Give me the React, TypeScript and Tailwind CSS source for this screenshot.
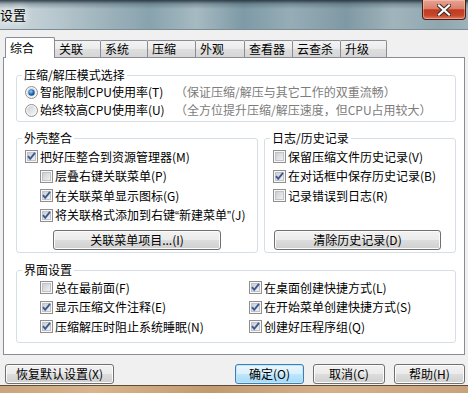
import React from "react";

type Item = { label: React.ReactNode; checked: boolean; indent?: boolean };

function CheckBox({ checked }: { checked: boolean }) {
  return (
    <svg width="13" height="13" viewBox="0 0 13 13" className="shrink-0">
      <defs>
        <linearGradient id="cb-fill" x1="0" y1="0" x2="1" y2="1">
          <stop offset="0" stopColor="#c9ccd1" />
          <stop offset="1" stopColor="#f3f3f3" />
        </linearGradient>
      </defs>
      <rect x="0.5" y="0.5" width="12" height="12" fill="#f8f8f8" stroke="#8f8f8f" />
      <rect x="2.5" y="2.5" width="8" height="8" fill="url(#cb-fill)" stroke="#bfc3c8" />
      {checked && (
        <path d="M3 6.2 L5.2 8.8 L10 2.8" fill="none" stroke="#3c5a92" strokeWidth="1.9" />
      )}
    </svg>
  );
}

function Radio({ checked }: { checked: boolean }) {
  return (
    <svg width="13" height="13" viewBox="0 0 13 13" className="shrink-0">
      <defs>
        <linearGradient id="rd-fill" x1="0" y1="0" x2="1" y2="1">
          <stop offset="0" stopColor="#cdd0d4" />
          <stop offset="1" stopColor="#f6f6f6" />
        </linearGradient>
        <radialGradient id="rd-dot" cx="0.4" cy="0.35" r="0.7">
          <stop offset="0" stopColor="#8fd0f5" />
          <stop offset="0.6" stopColor="#1d6cb8" />
          <stop offset="1" stopColor="#0d3f7a" />
        </radialGradient>
      </defs>
      <circle cx="6.5" cy="6.5" r="6" fill="#f6f6f6" stroke="#8f8f8f" />
      <circle cx="6.5" cy="6.5" r="4.4" fill="url(#rd-fill)" />
      {checked && <circle cx="6.5" cy="6.5" r="3.2" fill="url(#rd-dot)" />}
    </svg>
  );
}

function Check({ item, h = "h-[19.5px]" }: { item: Item; h?: string }) {
  return (
    <div className={`flex items-center gap-[2px] ${h} ${item.indent ? "pl-[15px]" : ""}`}>
      <CheckBox checked={item.checked} />
      <span className="whitespace-nowrap leading-[16px]">{item.label}</span>
    </div>
  );
}

function Group({
  title,
  className = "",
  children,
}: {
  title: string;
  className?: string;
  children: React.ReactNode;
}) {
  return (
    <fieldset className={`border border-[#d5dfe5] rounded-[3px] p-0 m-0 min-w-0 ${className}`}>
      <legend className="ml-[5px] px-[2px] leading-[16px]">{title}</legend>
      {children}
    </fieldset>
  );
}

function Button({
  children,
  className = "",
  primary = false,
}: {
  children: React.ReactNode;
  className?: string;
  primary?: boolean;
}) {
  return (
    <div
      className={`flex items-center justify-center h-[20px] rounded-[3px] border leading-[16px] whitespace-nowrap ${
        primary
          ? "border-[#3c7fb1] shadow-[inset_0_0_0_1px_#bfe6fb] bg-[linear-gradient(#eaf6fd_0%,#d9f0fc_50%,#bee6fd_51%,#a7d9f5_100%)]"
          : "border-[#707070] shadow-[inset_0_0_0_1px_#fbfbfb] bg-[linear-gradient(#f2f2f2_0%,#ebebeb_50%,#dddddd_51%,#cfcfcf_100%)]"
      } ${className}`}
    >
      {children}
    </div>
  );
}

const tabs = [
  { name: "综合", w: "w-[50px]" },
  { name: "关联", w: "w-[46px]" },
  { name: "系统", w: "w-[47px]" },
  { name: "压缩", w: "w-[48px]" },
  { name: "外观", w: "w-[49px]" },
  { name: "查看器", w: "w-[48px]" },
  { name: "云查杀", w: "w-[48px]" },
  { name: "升级", w: "w-[46px]" },
];

const shellItems: Item[] = [
  { label: "把好压整合到资源管理器(M)", checked: true },
  { label: "层叠右键关联菜单(P)", checked: false, indent: true },
  { label: "在关联菜单显示图标(G)", checked: true, indent: true },
  {
    label: (
      <>
        将关联格式添加到右键<span className="font-['Liberation_Sans',sans-serif]">“</span>新建菜单
        <span className="font-['Liberation_Sans',sans-serif]">”</span>(J)
      </>
    ),
    checked: true,
    indent: true,
  },
];

const logItems: Item[] = [
  { label: "保留压缩文件历史记录(V)", checked: false },
  { label: "在对话框中保存历史记录(B)", checked: true },
  { label: "记录错误到日志(R)", checked: false },
];

const uiLeft: Item[] = [
  { label: "总在最前面(F)", checked: false },
  { label: "显示压缩文件注释(E)", checked: true },
  { label: "压缩解压时阻止系统睡眠(N)", checked: true },
];

const uiRight: Item[] = [
  { label: "在桌面创建快捷方式(L)", checked: true },
  { label: "在开始菜单创建快捷方式(S)", checked: true },
  { label: "创建好压程序组(Q)", checked: true },
];

export default function App() {
  return (
    <div className="w-[468px] h-[393px] overflow-hidden bg-[#f0f0f0] flex flex-col font-['Noto_Sans_CJK_SC',sans-serif] text-[12px] text-black">
      {/* title bar */}
      <div className="h-[30px] shrink-0 flex items-start border-b border-[#7b8b93] bg-[linear-gradient(180deg,rgba(28,42,52,0.85)_0px,rgba(60,80,92,0.35)_4px,rgba(0,0,0,0)_9px),linear-gradient(90deg,#cfdadf_0%,#bccbd1_10%,#9fb4bc_22%,#88a3ae_32%,#a6bac1_42%,#7d9aa6_52%,#96adb6_62%,#7f99a4_74%,#a0b4bb_84%,#90a7b0_94%,#9db2ba_100%)]">
        <span className="mt-[6px] ml-0 text-[13px] leading-[18px] [text-shadow:0_0_6px_#ffffff,0_0_10px_#ffffff]">
          设置
        </span>
        <div className="ml-auto mr-[2px] w-[44px] h-[20px] flex items-center justify-center rounded-b-[4px] border border-t-0 border-[#4a1e15] bg-[linear-gradient(#e8a393_0%,#d9806b_45%,#c23a20_52%,#c5462a_80%,#e27a5d_100%)] shadow-[inset_0_0_0_1px_rgba(255,210,200,0.45)]">
          <svg width="14" height="12" viewBox="0 0 14 12">
            <path
              d="M2 1.5 L12 10.5 M12 1.5 L2 10.5"
              stroke="#3a2a28"
              strokeWidth="4.2"
              strokeLinecap="square"
            />
            <path
              d="M2 1.5 L12 10.5 M12 1.5 L2 10.5"
              stroke="#ffffff"
              strokeWidth="2.2"
              strokeLinecap="square"
            />
          </svg>
        </div>
      </div>

      <div className="px-[3px] flex flex-col">
        {/* tabs */}
        <div className="mt-[7px] h-[20px] flex items-end pl-[2px]">
          {tabs.map((t, i) =>
            i === 0 ? (
              <div
                key={t.name}
                className={`${t.w} h-[21px] -mb-px relative z-10 bg-white border border-b-0 border-[#898c95] rounded-t-[2px] pl-[4px] pt-[2px] leading-[16px]`}
              >
                {t.name}
              </div>
            ) : (
              <div
                key={t.name}
                className={`${t.w} h-[17px] border-t border-r border-[#898c95] rounded-tr-[2px] pl-[4px] flex items-center leading-[16px] bg-[linear-gradient(#f3f3f3_0%,#ebebeb_50%,#dedede_51%,#d6d6d6_100%)]`}
              >
                {t.name}
              </div>
            )
          )}
        </div>

        {/* panel */}
        <div className="relative bg-white border border-[#898c95] pt-[9px] pb-[11px] pl-[12px] pr-[8px] flex flex-col">
          <Group title="压缩/解压模式选择">
            <div className="pl-[8px] pb-[2px]">
              <div className="flex items-center h-[18px]">
                <div className="w-[150px] flex items-center gap-[2px]">
                  <Radio checked />
                  <span className="whitespace-nowrap">智能限制CPU使用率(T)</span>
                </div>
                <span className="text-[#7c7c7c] whitespace-nowrap">（保证压缩/解压与其它工作的双重流畅）</span>
              </div>
              <div className="flex items-center h-[18px]">
                <div className="w-[150px] flex items-center gap-[2px]">
                  <Radio checked={false} />
                  <span className="whitespace-nowrap">始终较高CPU使用率(U)</span>
                </div>
                <span className="text-[#7c7c7c] whitespace-nowrap">（全方位提升压缩/解压速度，但CPU占用较大）</span>
              </div>
            </div>
          </Group>

          <div className="mt-[8px] flex gap-[6px]">
            <Group title="外壳整合" className="w-[242px] shrink-0">
              <div className="pl-[8px] pt-[1px] pb-[2px] flex flex-col">
                {shellItems.map((it, i) => (
                  <Check key={i} item={it} />
                ))}
                <Button className="mt-[5px] ml-[28px] w-[168px]">关联菜单项目...(I)</Button>
              </div>
            </Group>
            <Group title="日志/历史记录" className="flex-1">
              <div className="pl-[8px] pt-[1px] pb-[2px] flex flex-col h-full">
                {logItems.map((it, i) => (
                  <Check key={i} item={it} />
                ))}
                <Button className="mt-auto ml-[1px] w-[167px]">清除历史记录(D)</Button>
              </div>
            </Group>
          </div>

          <Group title="界面设置" className="mt-[9px]">
            <div className="pl-[23px] pb-[5px] grid grid-cols-[209px_1fr]">
              <div className="flex flex-col">
                {uiLeft.map((it, i) => (
                  <Check key={i} item={it} />
                ))}
              </div>
              <div className="flex flex-col">
                {uiRight.map((it, i) => (
                  <Check key={i} item={it} />
                ))}
              </div>
            </div>
          </Group>
        </div>

        {/* dialog buttons */}
        <div className="mt-[9px] flex items-center">
          <Button className="ml-[2px] w-[109px]">恢复默认设置(X)</Button>
          <div className="flex-1" />
          <div className="flex gap-[9px]">
            <Button primary className="w-[69px]">确定(O)</Button>
            <Button className="w-[72px]">取消(C)</Button>
            <Button className="w-[71px]">帮助(H)</Button>
          </div>
        </div>
      </div>

      <div className="mt-auto h-[8px] shrink-0 border-t border-[#5e4b3a] bg-[linear-gradient(90deg,#c9a47c_0%,#d8b58c_20%,#c29a70_45%,#d4b089_70%,#c8a27a_100%)]" />
    </div>
  );
}
